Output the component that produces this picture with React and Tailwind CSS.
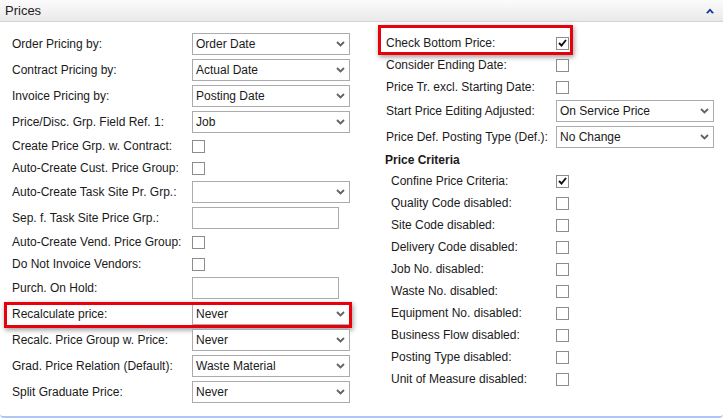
import React from 'react';

const leftRows = [
  { label: 'Order Pricing by:', type: 'select', value: 'Order Date' },
  { label: 'Contract Pricing by:', type: 'select', value: 'Actual Date' },
  { label: 'Invoice Pricing by:', type: 'select', value: 'Posting Date' },
  { label: 'Price/Disc. Grp. Field Ref. 1:', type: 'select', value: 'Job' },
  { label: 'Create Price Grp. w. Contract:', type: 'check' },
  { label: 'Auto-Create Cust. Price Group:', type: 'check' },
  { label: 'Auto-Create Task Site Pr. Grp.:', type: 'select', value: '' },
  { label: 'Sep. f. Task Site Price Grp.:', type: 'text' },
  { label: 'Auto-Create Vend. Price Group:', type: 'check' },
  { label: 'Do Not Invoice Vendors:', type: 'check' },
  { label: 'Purch. On Hold:', type: 'text' },
  { label: 'Recalculate price:', type: 'select', value: 'Never', highlight: true },
  { label: 'Recalc. Price Group w. Price:', type: 'select', value: 'Never' },
  { label: 'Grad. Price Relation (Default):', type: 'select', value: 'Waste Material' },
  { label: 'Split Graduate Price:', type: 'select', value: 'Never' },
];

const rightRows = [
  { label: 'Check Bottom Price:', type: 'check', checked: true, highlight: true },
  { label: 'Consider Ending Date:', type: 'check' },
  { label: 'Price Tr. excl. Starting Date:', type: 'check' },
  { label: 'Start Price Editing Adjusted:', type: 'select', value: 'On Service Price' },
  { label: 'Price Def. Posting Type (Def.):', type: 'select', value: 'No Change' },
];

const criteria = [
  { label: 'Confine Price Criteria:', checked: true },
  { label: 'Quality Code disabled:' },
  { label: 'Site Code disabled:' },
  { label: 'Delivery Code disabled:' },
  { label: 'Job No. disabled:' },
  { label: 'Waste No. disabled:' },
  { label: 'Equipment No. disabled:' },
  { label: 'Business Flow disabled:' },
  { label: 'Posting Type disabled:' },
  { label: 'Unit of Measure disabled:' },
];

function Select({ value }) {
  return (
    <div className="flex h-[22px] w-[158px] items-center justify-between border border-[#ababab] bg-white pl-[3px] pr-[4px]">
      <span className="whitespace-nowrap">{value}</span>
      <svg width="9" height="6" viewBox="0 0 9 6">
        <path d="M1 1 L4.5 4.5 L8 1" fill="none" stroke="#626262" strokeWidth="1.8" />
      </svg>
    </div>
  );
}

function TextBox() {
  return <div className="h-[22px] w-[147px] border border-[#ababab] bg-white" />;
}

function Check({ checked }) {
  return (
    <div className="flex h-[13px] w-[13px] items-center justify-center border border-[#8c8c8c] bg-white">
      {checked && (
        <svg width="9" height="8" viewBox="0 0 9 8">
          <path d="M1 4 L3.5 6.5 L8 1" fill="none" stroke="#111" strokeWidth="1.9" />
        </svg>
      )}
    </div>
  );
}

function Control({ row }) {
  if (row.type === 'select') return <Select value={row.value} />;
  if (row.type === 'text') return <TextBox />;
  return <Check checked={row.checked} />;
}

export default function App() {
  return (
    <div className="h-[419px] w-[723px] overflow-hidden bg-white text-[12px] text-[#1a1a1a] font-['Liberation_Sans',Arial,sans-serif]">
      <div className="flex h-[418px] flex-col rounded-b-[4px] border-b-2 border-[#a9c8f3]">
        <div className="flex h-[22px] shrink-0 items-center justify-between border-b border-[#d3d3d3] bg-linear-to-b from-[#fcfcfc] to-[#e9e9e9] pl-[5px] pr-[9px]">
          <span className="text-[13px] text-[#222]">Prices</span>
          <svg width="8" height="6" viewBox="0 0 8 6">
            <path d="M0 5 L4 0.5 L8 5 L6 5.5 L4 3 L2 5.5 Z" fill="#14349c" />
          </svg>
        </div>

        <div className="flex gap-[26px] pl-[4px] pt-[11px]">
          {/* left column */}
          <div className="flex w-[348px] flex-col gap-[4px]">
            {leftRows.map((row) => (
              <div
                key={row.label}
                className={`relative flex items-center pl-[8px] ${row.type === 'check' ? 'h-[18px]' : 'h-[22px]'}`}
              >
                {row.highlight && (
                  <div className="pointer-events-none absolute left-0 right-0 top-[-1px] bottom-[-3px] border-[3px] border-[#e8000b] shadow-[1px_2px_5px_rgba(0,0,0,0.4)]" />
                )}
                <span className="w-[180px] shrink-0 whitespace-nowrap">{row.label}</span>
                <Control row={row} />
              </div>
            ))}
          </div>

          {/* right column */}
          <div className="flex w-[340px] flex-col gap-[4px] pt-[1px]">
            {rightRows.map((row) => (
              <div
                key={row.label}
                className={`relative flex items-center pl-[8px] ${row.type === 'check' ? 'h-[18px]' : 'h-[22px]'}`}
              >
                {row.highlight && (
                  <div className="pointer-events-none absolute left-0 w-[195px] top-[-9px] bottom-[-3px] border-[3px] border-[#e8000b] shadow-[1px_2px_5px_rgba(0,0,0,0.4)]" />
                )}
                <span className="w-[170px] shrink-0 whitespace-nowrap">{row.label}</span>
                <Control row={row} />
              </div>
            ))}
            <div className="flex h-[16px] items-center pl-[7px] font-bold">Price Criteria</div>
            {criteria.map((row) => (
              <div key={row.label} className="flex h-[18px] items-center pl-[13px]">
                <span className="w-[165px] shrink-0 whitespace-nowrap">{row.label}</span>
                <Check checked={row.checked} />
              </div>
            ))}
          </div>
        </div>
      </div>
    </div>
  );
}
